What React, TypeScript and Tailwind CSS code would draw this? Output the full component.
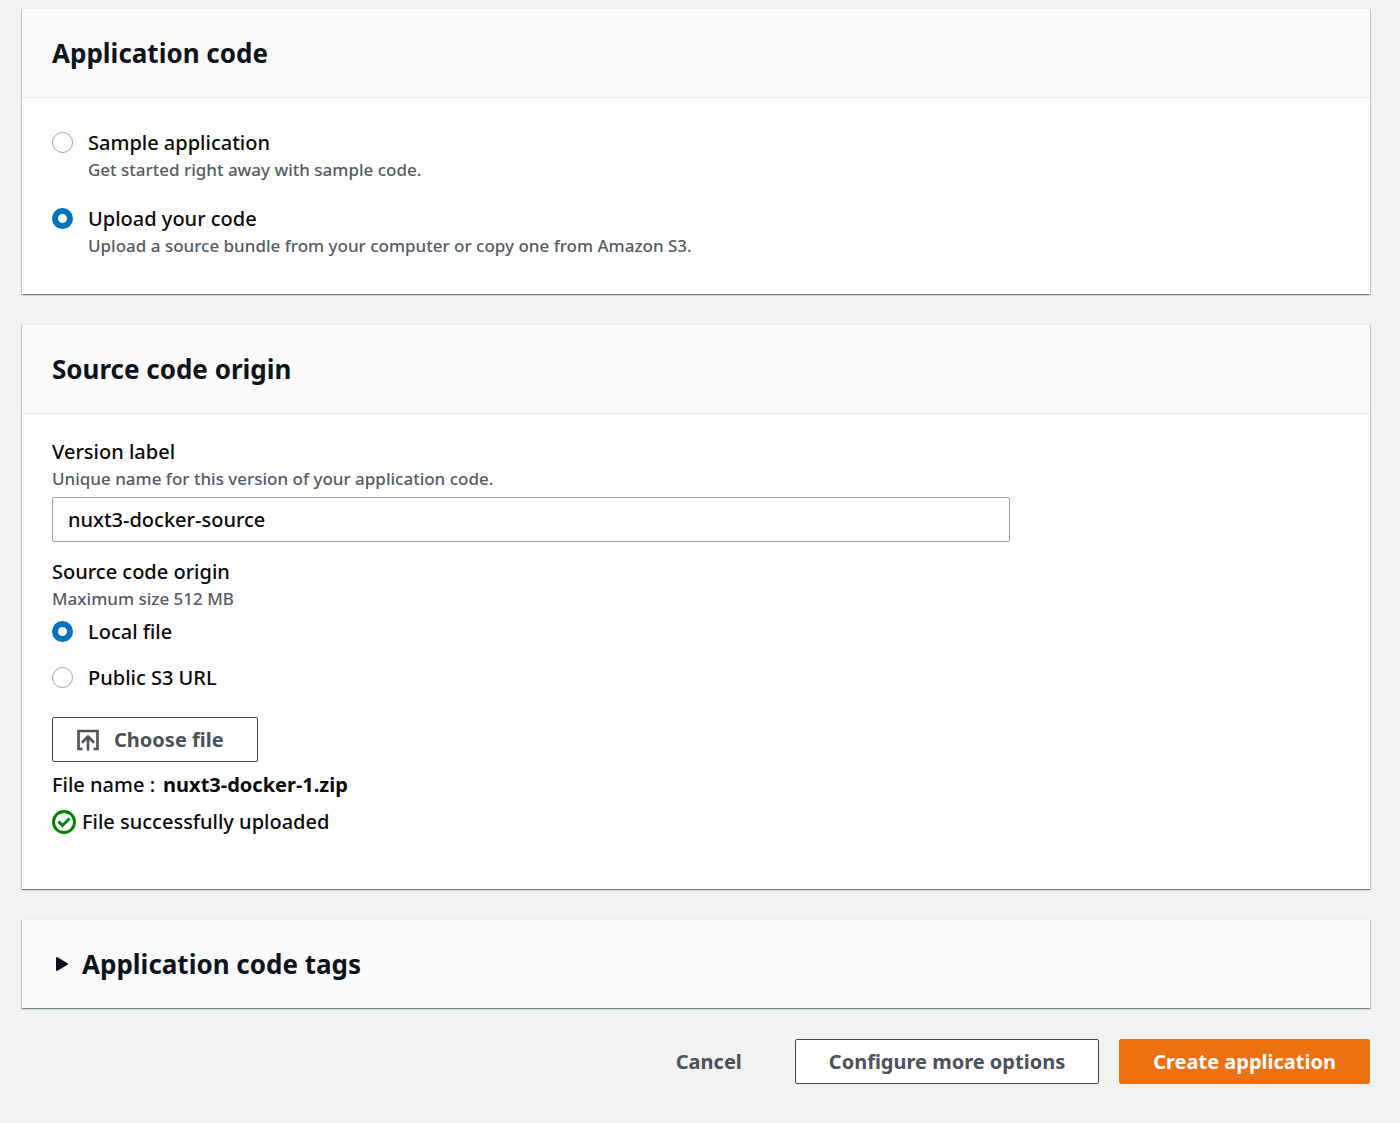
import { useState } from "react";
import type { ReactNode } from "react";

function Panel({ title, children }: { title: ReactNode; children?: ReactNode }) {
  return (
    <section className="border-t border-[#eaeded] bg-white shadow-[0_1px_1px_rgba(0,28,36,0.35),1px_1px_1px_rgba(0,28,36,0.15),-1px_1px_1px_rgba(0,28,36,0.15)]">
      <h2 className="flex h-[88px] items-center bg-[#fafafa] px-[30px] text-[26px] font-bold text-[#0f141a]">{title}</h2>
      {children}
    </section>
  );
}

function RadioOption({
  name,
  label,
  description,
  checked,
  onChange,
}: {
  name: string;
  label: string;
  description?: string;
  checked: boolean;
  onChange: () => void;
}) {
  return (
    <label className="flex items-start gap-[15px]">
      <input
        type="radio"
        name={name}
        checked={checked}
        onChange={onChange}
        className="mt-1 size-[21px] shrink-0 appearance-none rounded-full border border-[#95a5a6] bg-white checked:border-[6px] checked:border-[#0073bb]"
      />
      <span>
        <span className="block text-[20px] leading-[30px]">{label}</span>
        {description && <span className="block text-[17px] leading-6 text-[#545b64]">{description}</span>}
      </span>
    </label>
  );
}

function UploadIcon() {
  return (
    <svg viewBox="0 0 22 22" className="size-[22px]" fill="none" stroke="currentColor" strokeWidth="2.6" aria-hidden="true">
      <path d="M5.500 20H1.500V2h19v18h-4M11 21.500V8M5 13.500l6-6 6 6" />
    </svg>
  );
}

function SuccessIcon() {
  return (
    <svg viewBox="0 0 24 24" className="size-6 text-[#008000]" fill="none" stroke="currentColor" strokeWidth="2.800" aria-hidden="true">
      <circle cx="12" cy="12" r="10.500" />
      <path d="M6.500 11.500l4 4 7-7" />
    </svg>
  );
}

export default function App() {
  const [code, setCode] = useState("upload");
  const [origin, setOrigin] = useState("local");
  const [version, setVersion] = useState("nuxt3-docker-source");

  return (
    <main className="min-h-screen bg-[#f1f3f3] pt-2 pr-[30px] pb-[39px] pl-[22px] font-['Noto_Sans',sans-serif] font-medium text-[#0a0a0a]">
      <div className="flex flex-col gap-[30px]">
        <Panel title="Application code">
          <div className="flex flex-col gap-[22px] border-t border-[#e4e9e9] px-[30px] pt-[30px] pb-9">
            <RadioOption
              name="code"
              label="Sample application"
              description="Get started right away with sample code."
              checked={code === "sample"}
              onChange={() => setCode("sample")}
            />
            <RadioOption
              name="code"
              label="Upload your code"
              description="Upload a source bundle from your computer or copy one from Amazon S3."
              checked={code === "upload"}
              onChange={() => setCode("upload")}
            />
          </div>
        </Panel>

        <Panel title="Source code origin">
          <div className="border-t border-[#e4e9e9] px-[30px] pt-[23px] pb-[52px]">
            <label htmlFor="version" className="block text-[20px] leading-[30px]">Version label</label>
            <p id="version-hint" className="text-[17px] leading-6 text-[#545b64]">Unique name for this version of your application code.</p>
            <input
              id="version"
              aria-describedby="version-hint"
              value={version}
              onChange={(e) => setVersion(e.target.value)}
              className="mt-[6px] block h-[45px] w-full max-w-[958px] rounded-xs border border-[#95a5a6] bg-white px-[15px] text-[20px]"
            />
            <fieldset className="mt-[15px]">
              <legend className="text-[20px] leading-[30px]">Source code origin</legend>
              <p className="text-[17px] leading-6 text-[#545b64]">Maximum size 512 MB</p>
              <div className="mt-[6px] flex flex-col gap-4">
                <RadioOption name="origin" label="Local file" checked={origin === "local"} onChange={() => setOrigin("local")} />
                <RadioOption name="origin" label="Public S3 URL" checked={origin === "s3"} onChange={() => setOrigin("s3")} />
              </div>
            </fieldset>
            <button type="button" className="mt-6 flex h-[45px] items-center gap-[15px] rounded-xs border border-[#414750] bg-white pr-[33px] pl-6 text-[20px] font-bold text-[#4a515b]">
              <UploadIcon />
              Choose file
            </button>
            <p className="mt-2 flex gap-2 text-[20px] leading-[30px]">
              File name : <b>nuxt3-docker-1.zip</b>
            </p>
            <p className="mt-[7px] flex items-center gap-[6px] text-[20px] leading-[30px]">
              <SuccessIcon />
              File successfully uploaded
            </p>
          </div>
        </Panel>

        <Panel
          title={
            <button type="button" aria-expanded="false" className="flex items-center gap-[14px]">
              <svg viewBox="0 0 13 16" className="ml-[3px] h-4 w-[13px]" fill="currentColor" stroke="currentColor" strokeWidth="2" strokeLinejoin="round" aria-hidden="true">
                <path d="M2 2l10 6-10 6z" />
              </svg>
              Application code tags
            </button>
          }
        />
      </div>

      <div className="mt-[31px] flex justify-end gap-5 text-[20px] font-bold text-[#4a515b]">
        <button type="button" className="h-[45px] px-[33px]">Cancel</button>
        <button type="button" className="h-[45px] rounded-xs border border-[#414750] bg-white px-[33px]">Configure more options</button>
        <button type="button" className="h-[45px] rounded-xs border border-[#ec7211] bg-[#ec7211] px-[33px] text-white">Create application</button>
      </div>
    </main>
  );
}
